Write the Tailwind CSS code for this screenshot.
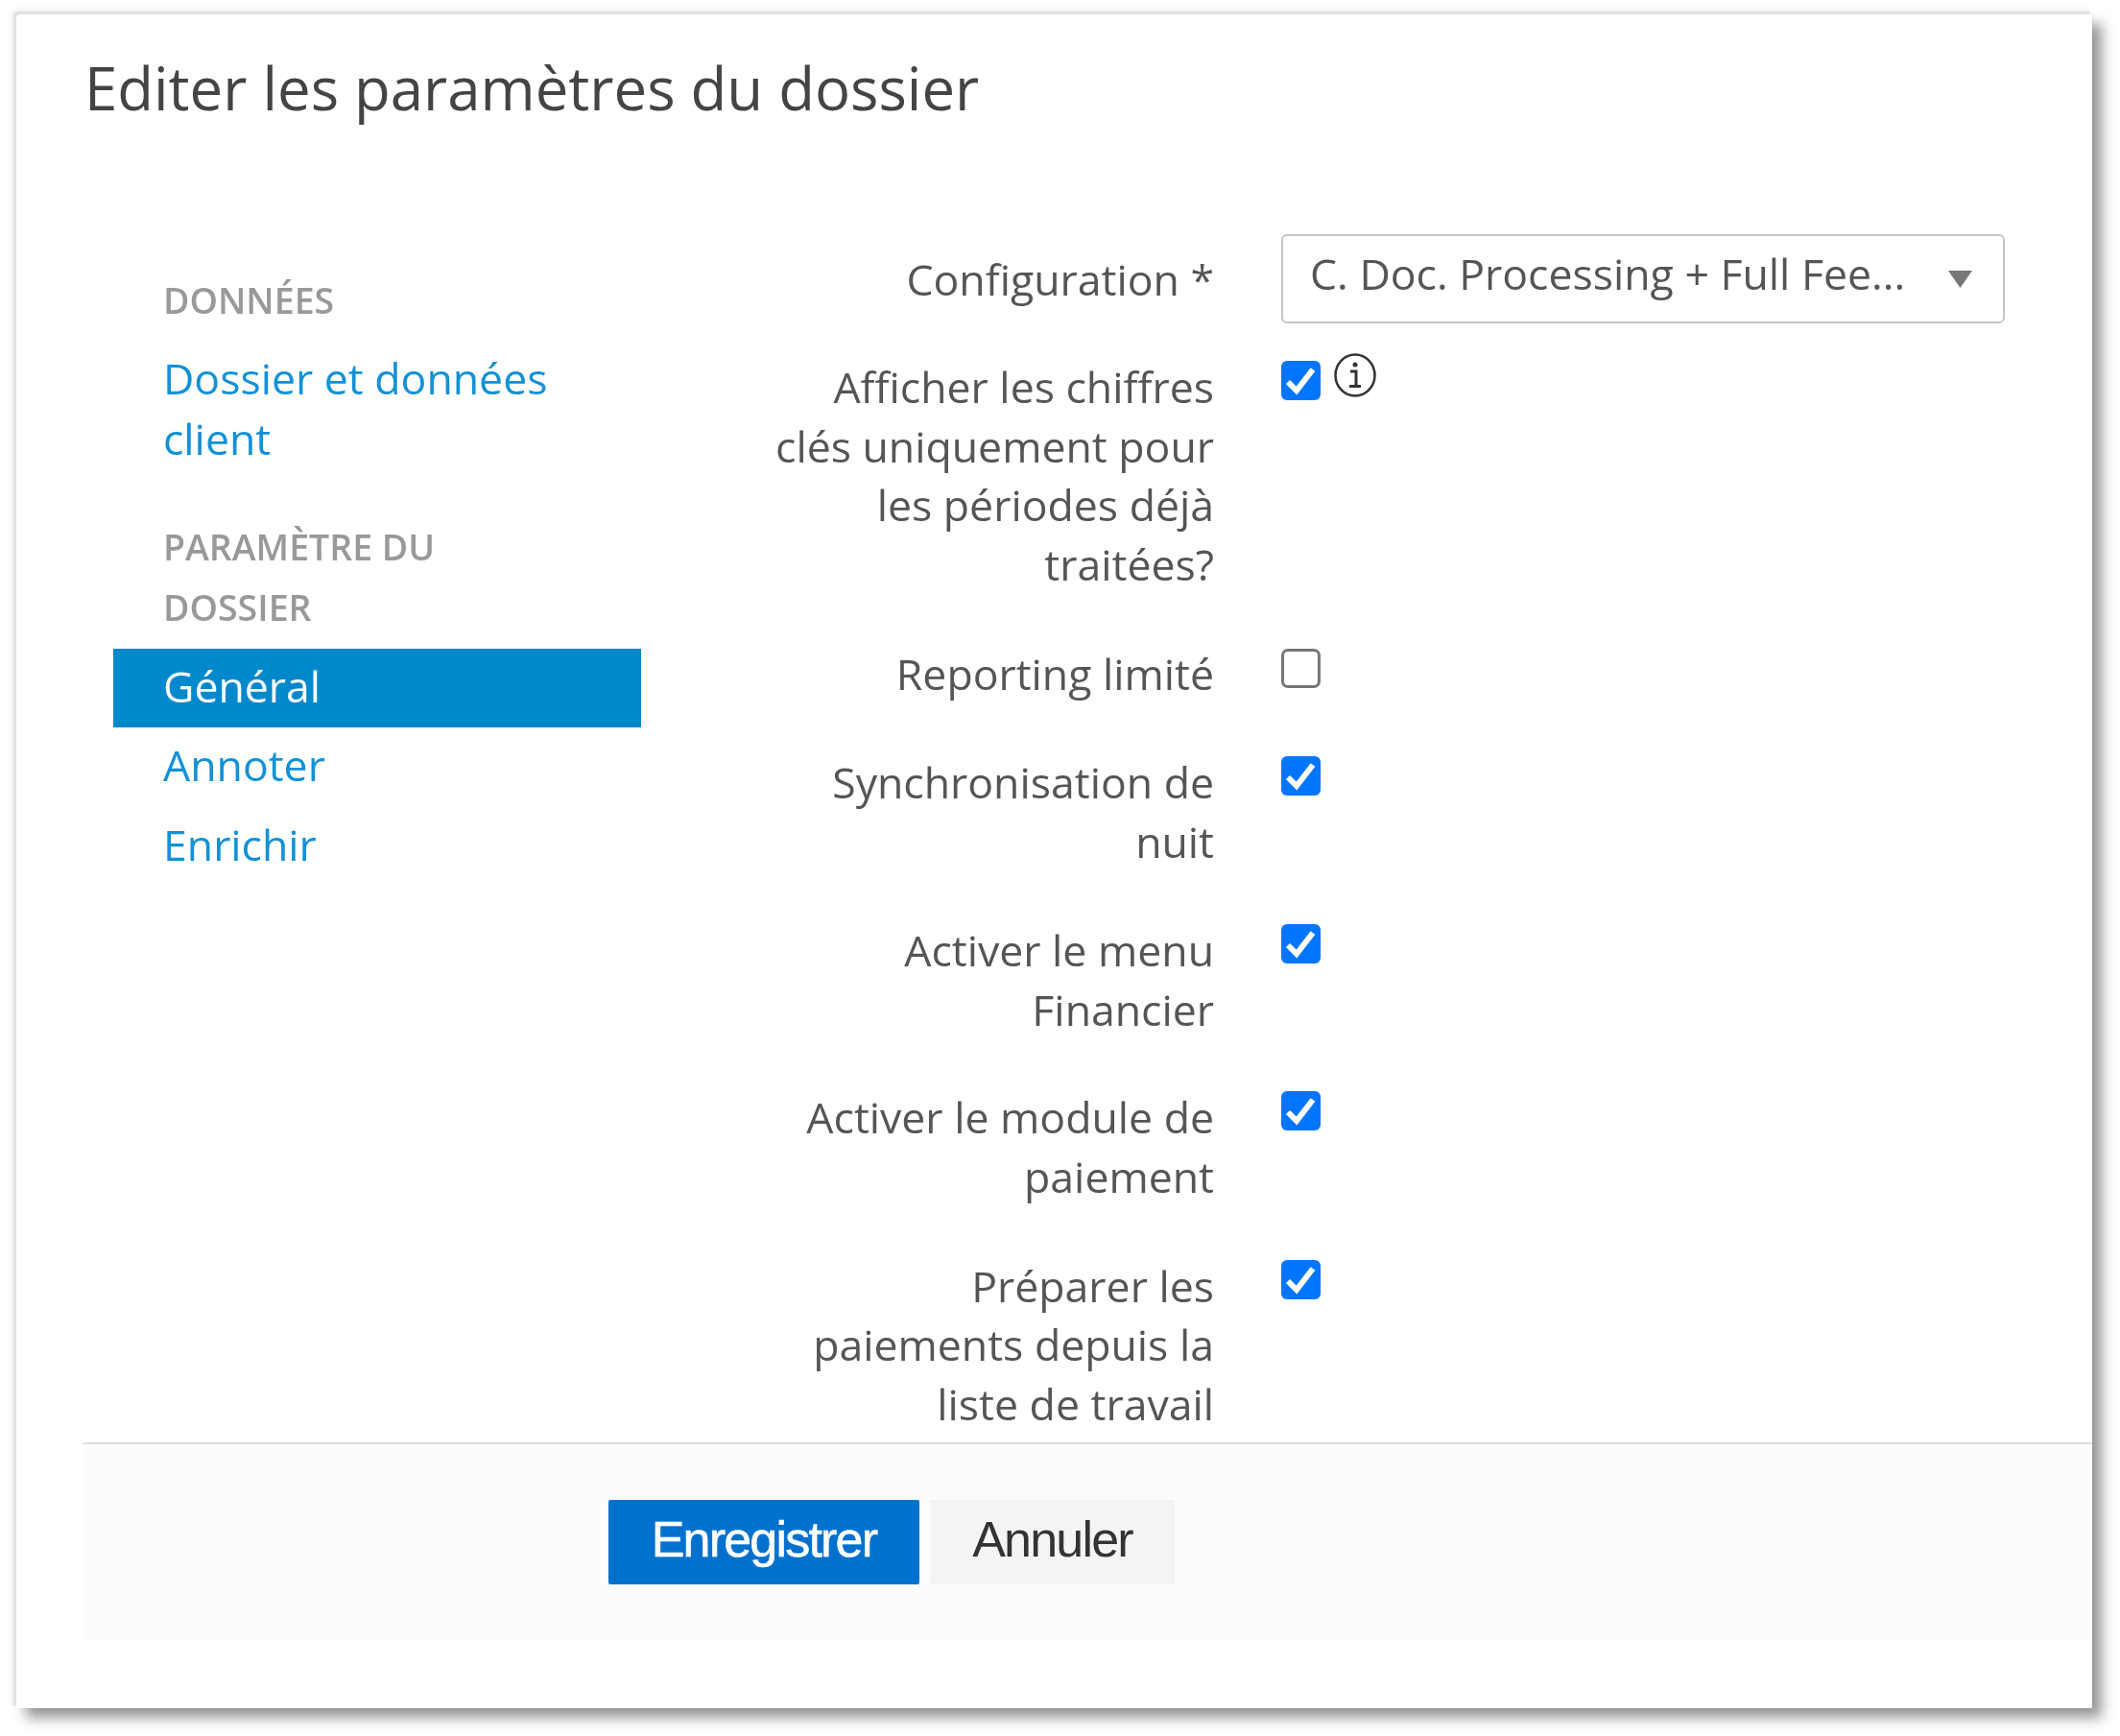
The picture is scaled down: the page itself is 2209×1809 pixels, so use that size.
<!DOCTYPE html>
<html lang="fr">
  <head>
    <meta charset="UTF-8" />
    <title>Editer les paramètres du dossier</title>
    <script src="https://cdn.jsdelivr.net/npm/@tailwindcss/browser@4"></script>
  </head>
  <body class="bg-white h-[1809px] overflow-hidden font-['Open_Sans',sans-serif]">
    <div class="pt-[15px] pl-[17px]">
      <!-- Dialog -->
      <div class="w-[2163px] h-[1765px] bg-white rounded-tl-[4px] flex flex-col blur-[0.6px] shadow-[-3px_-3px_0_#e2e2e2,10px_10px_14px_rgba(0,0,0,0.42),-3px_-3px_8px_rgba(0,0,0,0.12)]">
        <h1 class="h-[150px] pl-[71px] pt-[36px] text-[61.7px] leading-[80px] text-[#444]">Editer les paramètres du dossier</h1>

        <div class="flex-1 min-h-0 overflow-hidden flex pl-[101px]">
          <!-- Side menu -->
          <nav class="w-[550px] shrink-0 pt-[115.5px] text-[44.6px] leading-[63px]">
            <div class="px-[52px] text-[37.5px] font-semibold text-[#999]">DONNÉES</div>
            <a class="block px-[52px] mt-[18.5px] text-[#1391d6]">Dossier et données client</a>
            <div class="pl-[52px] pr-[150px] mt-[50px] text-[37.5px] font-semibold text-[#999]">PARAMÈTRE DU DOSSIER</div>
            <a class="block mt-[12px] h-[82px] px-[52px] leading-[77px] bg-[#0088cc] text-white">Général</a>
            <a class="block h-[83px] px-[52px] leading-[78px] text-[#1391d6]">Annoter</a>
            <a class="block h-[83px] px-[52px] leading-[78px] text-[#1391d6]">Enrichir</a>
          </nav>

          <!-- Form -->
          <div class="ml-[136px] pt-[79px] text-[44.6px] leading-[61.5px] text-[#555]">
            <div class="flex items-center gap-[70px]">
              <label class="w-[461px] text-right">Configuration *</label>
              <div class="w-[754px] h-[93px] border-2 border-[#c4c4c4] rounded-[6px] pl-[28px] pr-[32px] flex items-center justify-between">
                <span class="-mt-[11px]">C. Doc. Processing + Full Fee...</span>
                <svg class="w-[25px] h-[18px]" viewBox="0 0 25 18"><path d="M0 0H25L12.5 18Z" fill="#777" /></svg>
              </div>
            </div>

            <div class="flex items-start gap-[70px] mt-[35px]">
              <label class="w-[461px] text-right">Afficher les chiffres clés uniquement pour les périodes déjà traitées?</label>
              <div class="flex items-start">
                <div class="relative w-[41px] h-[41px] mt-[4px]">
                  <input type="checkbox" checked class="block w-full h-full appearance-none rounded-[6px] bg-[#0075ff]" />
                  <svg class="absolute inset-0" viewBox="0 0 41 41" fill="none" stroke="#fff" stroke-width="6"><path d="M7 22L16 31L33 9" /></svg>
                </div>
                <svg class="w-[44px] h-[46px] ml-[14px] -mt-[4px]" viewBox="0 0 44 46" fill="none" stroke="#333">
                  <ellipse cx="22" cy="23" rx="20.5" ry="21.5" stroke-width="2.5" />
                  <circle cx="22" cy="12" r="2.5" fill="#333" stroke="none" />
                  <path d="M17 19H23V34M16 34.5H28" stroke-width="3" />
                </svg>
              </div>
            </div>

            <div class="flex items-start gap-[70px] mt-[53px]">
              <label class="w-[461px] text-right">Reporting limité</label>
              <input type="checkbox" class="block w-[41px] h-[41px] mt-[5px] appearance-none rounded-[7px] border-3 border-[#777] bg-white" />
            </div>

            <div class="flex items-start gap-[70px] mt-[51.5px]">
              <label class="w-[461px] text-right">Synchronisation de nuit</label>
              <div class="relative w-[41px] h-[41px] mt-[4px]">
                <input type="checkbox" checked class="block w-full h-full appearance-none rounded-[6px] bg-[#0075ff]" />
                <svg class="absolute inset-0" viewBox="0 0 41 41" fill="none" stroke="#fff" stroke-width="6"><path d="M7 22L16 31L33 9" /></svg>
              </div>
            </div>

            <div class="flex items-start gap-[70px] mt-[52px]">
              <label class="w-[461px] text-right">Activer le menu Financier</label>
              <div class="relative w-[41px] h-[41px] mt-[4px]">
                <input type="checkbox" checked class="block w-full h-full appearance-none rounded-[6px] bg-[#0075ff]" />
                <svg class="absolute inset-0" viewBox="0 0 41 41" fill="none" stroke="#fff" stroke-width="6"><path d="M7 22L16 31L33 9" /></svg>
              </div>
            </div>

            <div class="flex items-start gap-[70px] mt-[51px]">
              <label class="w-[461px] text-right">Activer le module de paiement</label>
              <div class="relative w-[41px] h-[41px] mt-[4px]">
                <input type="checkbox" checked class="block w-full h-full appearance-none rounded-[6px] bg-[#0075ff]" />
                <svg class="absolute inset-0" viewBox="0 0 41 41" fill="none" stroke="#fff" stroke-width="6"><path d="M7 22L16 31L33 9" /></svg>
              </div>
            </div>

            <div class="flex items-start gap-[70px] mt-[52.5px]">
              <label class="w-[461px] text-right">Préparer les paiements depuis la liste de travail</label>
              <div class="relative w-[41px] h-[41px] mt-[4px]">
                <input type="checkbox" checked class="block w-full h-full appearance-none rounded-[6px] bg-[#0075ff]" />
                <svg class="absolute inset-0" viewBox="0 0 41 41" fill="none" stroke="#fff" stroke-width="6"><path d="M7 22L16 31L33 9" /></svg>
              </div>
            </div>
          </div>
        </div>

        <!-- Footer -->
        <div class="ml-[69px] h-[206px] shrink-0 border-t-2 border-[#ddd] bg-[#fcfcfc] pt-[58px] pl-[548px] flex items-start gap-[11px] font-['Liberation_Sans',sans-serif] text-[52px]">
          <button class="w-[324px] h-[88px] pb-[6px] bg-[#0072ce] text-white rounded-[2px] tracking-[-1.8px] [-webkit-text-stroke:0.6px_#fff]">Enregistrer</button>
          <button class="w-[255px] h-[88px] pb-[6px] bg-[#f4f4f4] text-[#333] tracking-[-1.8px]">Annuler</button>
        </div>

        <div class="h-[71px] shrink-0"></div>
      </div>
    </div>
  </body>
</html>
